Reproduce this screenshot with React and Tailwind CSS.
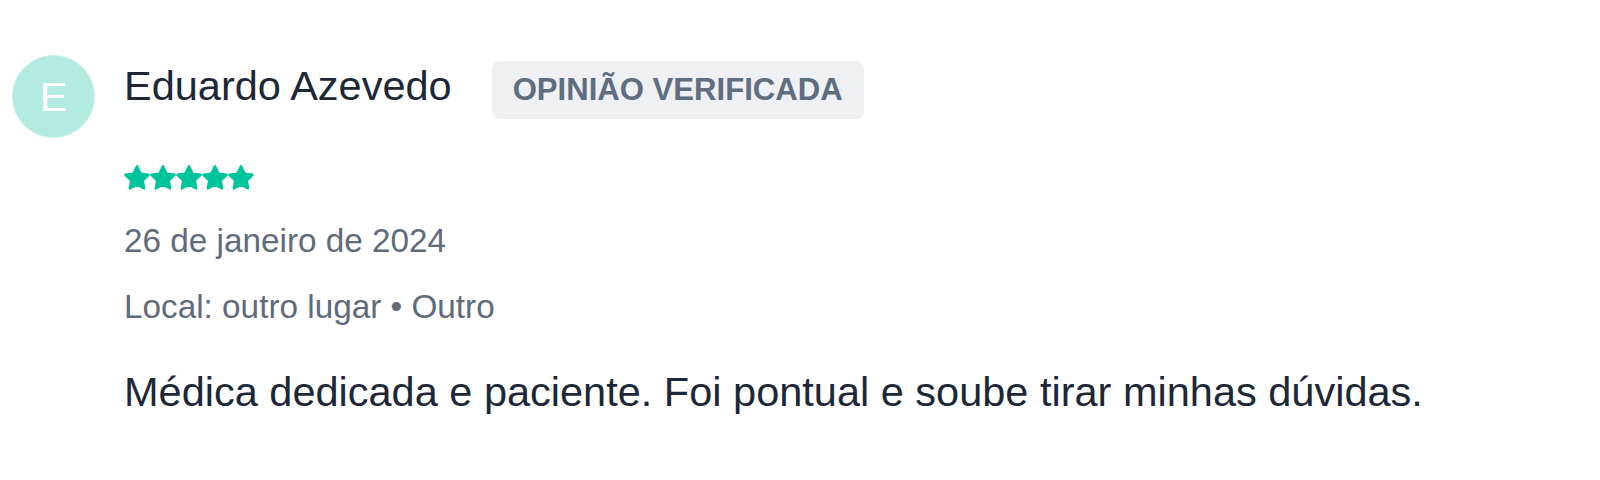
const FONT = { fontFamily: '"Liberation Sans", Arial, sans-serif' }

function Star() {
  return (
    <svg viewBox="1.3 1.4 21.4 21" className="w-[26px] h-[25.5px]" fill="#00c49c" stroke="#00c49c" strokeWidth="2" strokeLinejoin="round">
      <path d="M12 2.5l2.95 5.98 6.6.96-4.78 4.65 1.13 6.57L12 17.56l-5.9 3.1 1.13-6.57-4.78-4.65 6.6-.96z" />
    </svg>
  )
}

export default function App() {
  const review = {
    name: 'Eduardo Azevedo',
    date: '26 de janeiro de 2024',
    local: 'Local: outro lugar • Outro',
    text: 'Médica dedicada e paciente. Foi pontual e soube tirar minhas dúvidas.',
    rating: 5,
  }

  return (
    <div className="w-[1600px] h-[480px] bg-white" style={FONT}>
      <div className="flex gap-[29px] pl-[12px] pt-[55px]">
        {/* avatar */}
        <div className="w-[83px] h-[83px] shrink-0 rounded-full bg-[#b3ebe0] border border-[#c4f0e7] flex items-center justify-center text-white text-[41.5px] leading-none">
          E
        </div>

        <div className="flex flex-col">
          <div className="flex items-baseline gap-[40px]">
            <span className="text-[41.5px] leading-[1.48] text-[#1d2737]">{review.name}</span>
            <span className="bg-[#eef0f3] text-[#5e6d7f] font-bold text-[31.1px] leading-[37.5px] px-[21px] py-[10.24px] rounded-[8px]">
              OPINIÃO VERIFICADA
            </span>
          </div>

          <div className="flex mt-[46px]">
            {Array.from({ length: review.rating }).map((_, i) => <Star key={i} />)}
          </div>

          <p className="mt-[26px] text-[33.3px] leading-[1.48] text-[#5f6b7a]">{review.date}</p>
          <p className="mt-[16px] text-[33.3px] leading-[1.48] text-[#5f6b7a]">{review.local}</p>

          <p className="mt-[30px] text-[41.5px] leading-[1.48] text-[#1d2737]">{review.text}</p>
        </div>
      </div>
    </div>
  )
}
